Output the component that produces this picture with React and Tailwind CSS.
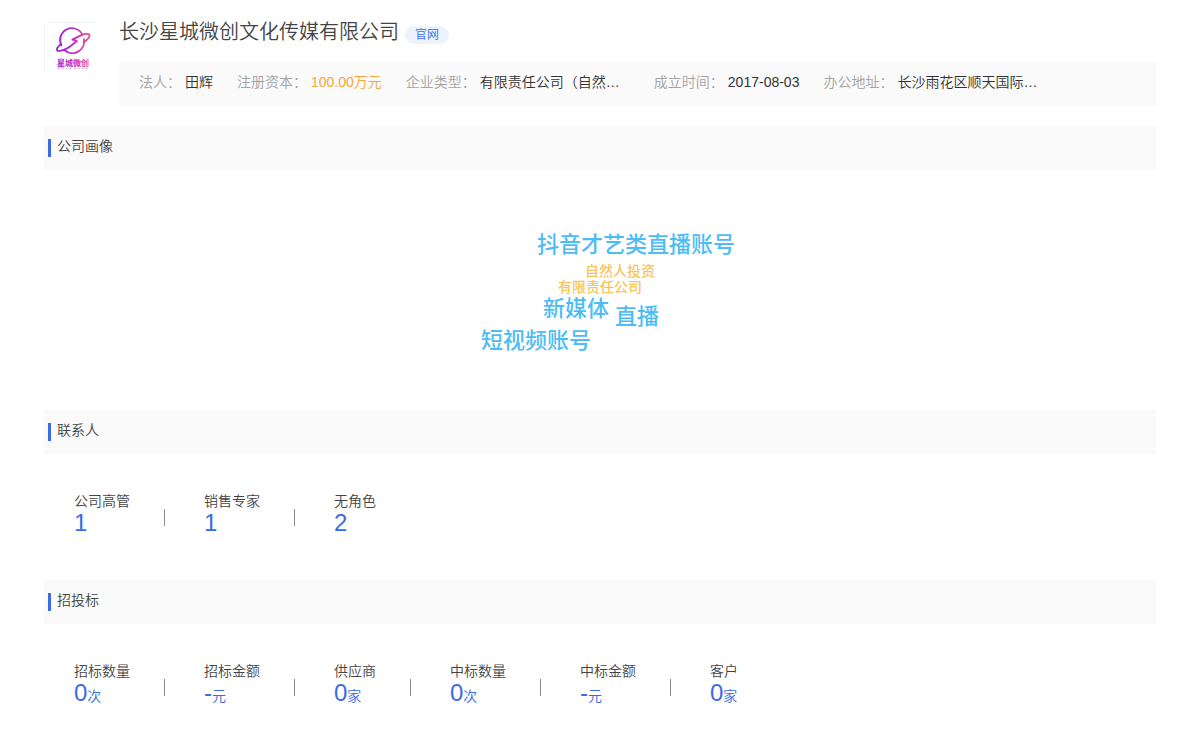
const facts = [
  { label: "法人", value: "田辉" },
  { label: "注册资本", value: "100.00万元", tone: "text-[#f2a63c]" },
  { label: "企业类型", value: "有限责任公司（自然…", wide: true },
  { label: "成立时间", value: "2017-08-03" },
  { label: "办公地址", value: "长沙雨花区顺天国际…", wide: true },
];

const words = [
  { text: "抖音才艺类直播账号", style: "-left-16 top-[61px] text-[22px] text-[#4cbcf5]" },
  { text: "自然人投资", style: "-left-4 top-[93px] text-sm text-[#f8c455]" },
  { text: "有限责任公司", style: "-left-[43px] top-[109px] text-sm text-[#f8c455]" },
  { text: "新媒体", style: "-left-[58px] top-[125px] text-[22px] text-[#4cbcf5]" },
  { text: "直播", style: "left-[14px] top-[133px] text-[22px] text-[#4cbcf5]" },
  { text: "短视频账号", style: "-left-[120px] top-[157px] text-[22px] text-[#4cbcf5]" },
];

const contacts = [
  { label: "公司高管", value: "1" },
  { label: "销售专家", value: "1" },
  { label: "无角色", value: "2" },
];

const bids = [
  { label: "招标数量", value: "0", unit: "次" },
  { label: "招标金额", value: "-", unit: "元" },
  { label: "供应商", value: "0", unit: "家" },
  { label: "中标数量", value: "0", unit: "次" },
  { label: "中标金额", value: "-", unit: "元" },
  { label: "客户", value: "0", unit: "家" },
];

function Logo() {
  return (
    <svg viewBox="0 0 56 56" className="size-14 shrink-0" role="img" aria-label="星城微创">
      <defs>
        <linearGradient id="brand" gradientUnits="userSpaceOnUse" x1="12" y1="0" x2="47" y2="0">
          <stop offset="0" stopColor="#9a1fd6" />
          <stop offset="0.5" stopColor="#c42bc0" />
          <stop offset="1" stopColor="#f0507f" />
        </linearGradient>
      </defs>
      <path d="M0.5 0V52M4 0.5H52" stroke="#f0f0f0" strokeWidth="0.8" fill="none" />
      <g fill="none" stroke="url(#brand)" strokeWidth="1.8" strokeLinecap="round" strokeLinejoin="round">
        <path d="M17.4 23.4A11.8 11.8 0 0 1 38.4 12.6L28.4 17.6L33 19L25 25.2" />
        <path d="M40 17.2A11.8 11.8 0 0 1 20.4 28" />
        <path d="M38.4 12.6C42 11.4 45.8 11.6 45.6 13.6C45.4 15.8 42.6 18.2 39.6 20.4" />
        <path d="M17.2 22C14.2 24.2 12.2 26.8 13.2 28.4C14.4 30 20.6 28 25 25.2" />
      </g>
      <text
        x="29"
        y="44"
        textAnchor="middle"
        fontSize="8"
        fontWeight="700"
        fill="url(#brand)"
      >
        星城微创
      </text>
      <path d="M14 46.5H46" stroke="#c9a9d4" strokeWidth="1" strokeDasharray="1.5 2.5" />
    </svg>
  );
}

function Section({ title, children }) {
  return (
    <section>
      <div className="flex h-11 items-center bg-[#fafafa] pl-1">
        <span className="h-[18px] w-[3px] bg-[#3a6be4]" />
        <h2 className="pb-1 pl-1.5 text-sm">{title}</h2>
      </div>
      {children}
    </section>
  );
}

function Stats({ items }) {
  return (
    <dl className="flex flex-wrap px-[30px] pb-[37px] pt-[35px]">
      {items.map((item, index) => (
        <div key={item.label} className="flex items-center">
          {index > 0 && <span className="ml-[34px] mr-[39px] mt-0.5 h-[17px] w-px bg-[#8c8c8c]" />}
          <div>
            <dt className="text-sm leading-6">{item.label}</dt>
            <dd className="flex h-[30px] items-baseline text-2xl leading-5 text-[#3a6be4]">
              {item.value}
              {item.unit && <span className="text-sm leading-5">{item.unit}</span>}
            </dd>
          </div>
        </div>
      ))}
    </dl>
  );
}

export default function App() {
  return (
    <main className="min-h-screen bg-white px-11 pt-[22px] font-['Liberation_Sans','Noto_Sans_CJK_SC_DemiLight','Noto_Sans_CJK_SC',sans-serif] text-[#444444]">
      <header className="flex gap-[19px]">
        <Logo />
        <div className="min-w-0 flex-1">
          <div className="flex h-10 gap-1.5">
            <h1 className="text-xl leading-5">长沙星城微创文化传媒有限公司</h1>
            <a href="#website" className="mt-1 h-[18px] rounded-full bg-[#edf3fd] px-2.5 text-xs leading-[18px] text-[#3a6be4]">
              官网
            </a>
          </div>
          <dl className="flex min-h-11 flex-wrap gap-x-6 bg-[#fafafa] px-5 pt-2.5 text-sm leading-5">
            {facts.map((fact) => (
              <div key={fact.label} className="flex gap-1">
                <dt className="text-[#a3a3a3]">{fact.label}：</dt>
                <dd className={`${fact.tone ?? "text-[#333333]"} ${fact.wide ? "w-[150px] whitespace-nowrap" : ""}`}>
                  {fact.value}
                </dd>
              </div>
            ))}
          </dl>
        </div>
      </header>
      <div className="mt-5">
        <Section title="公司画像">
          <div className="flex h-60 justify-center">
            <ul className="relative w-0 font-['Noto_Sans_CJK_SC_Medium','Noto_Sans_CJK_SC',sans-serif] font-medium">
              {words.map((word) => (
                <li key={word.text} className={`absolute ml-px whitespace-nowrap leading-none ${word.style}`}>
                  {word.text}
                </li>
              ))}
            </ul>
          </div>
        </Section>
        <Section title="联系人">
          <Stats items={contacts} />
        </Section>
        <Section title="招投标">
          <Stats items={bids} />
        </Section>
      </div>
    </main>
  );
}
